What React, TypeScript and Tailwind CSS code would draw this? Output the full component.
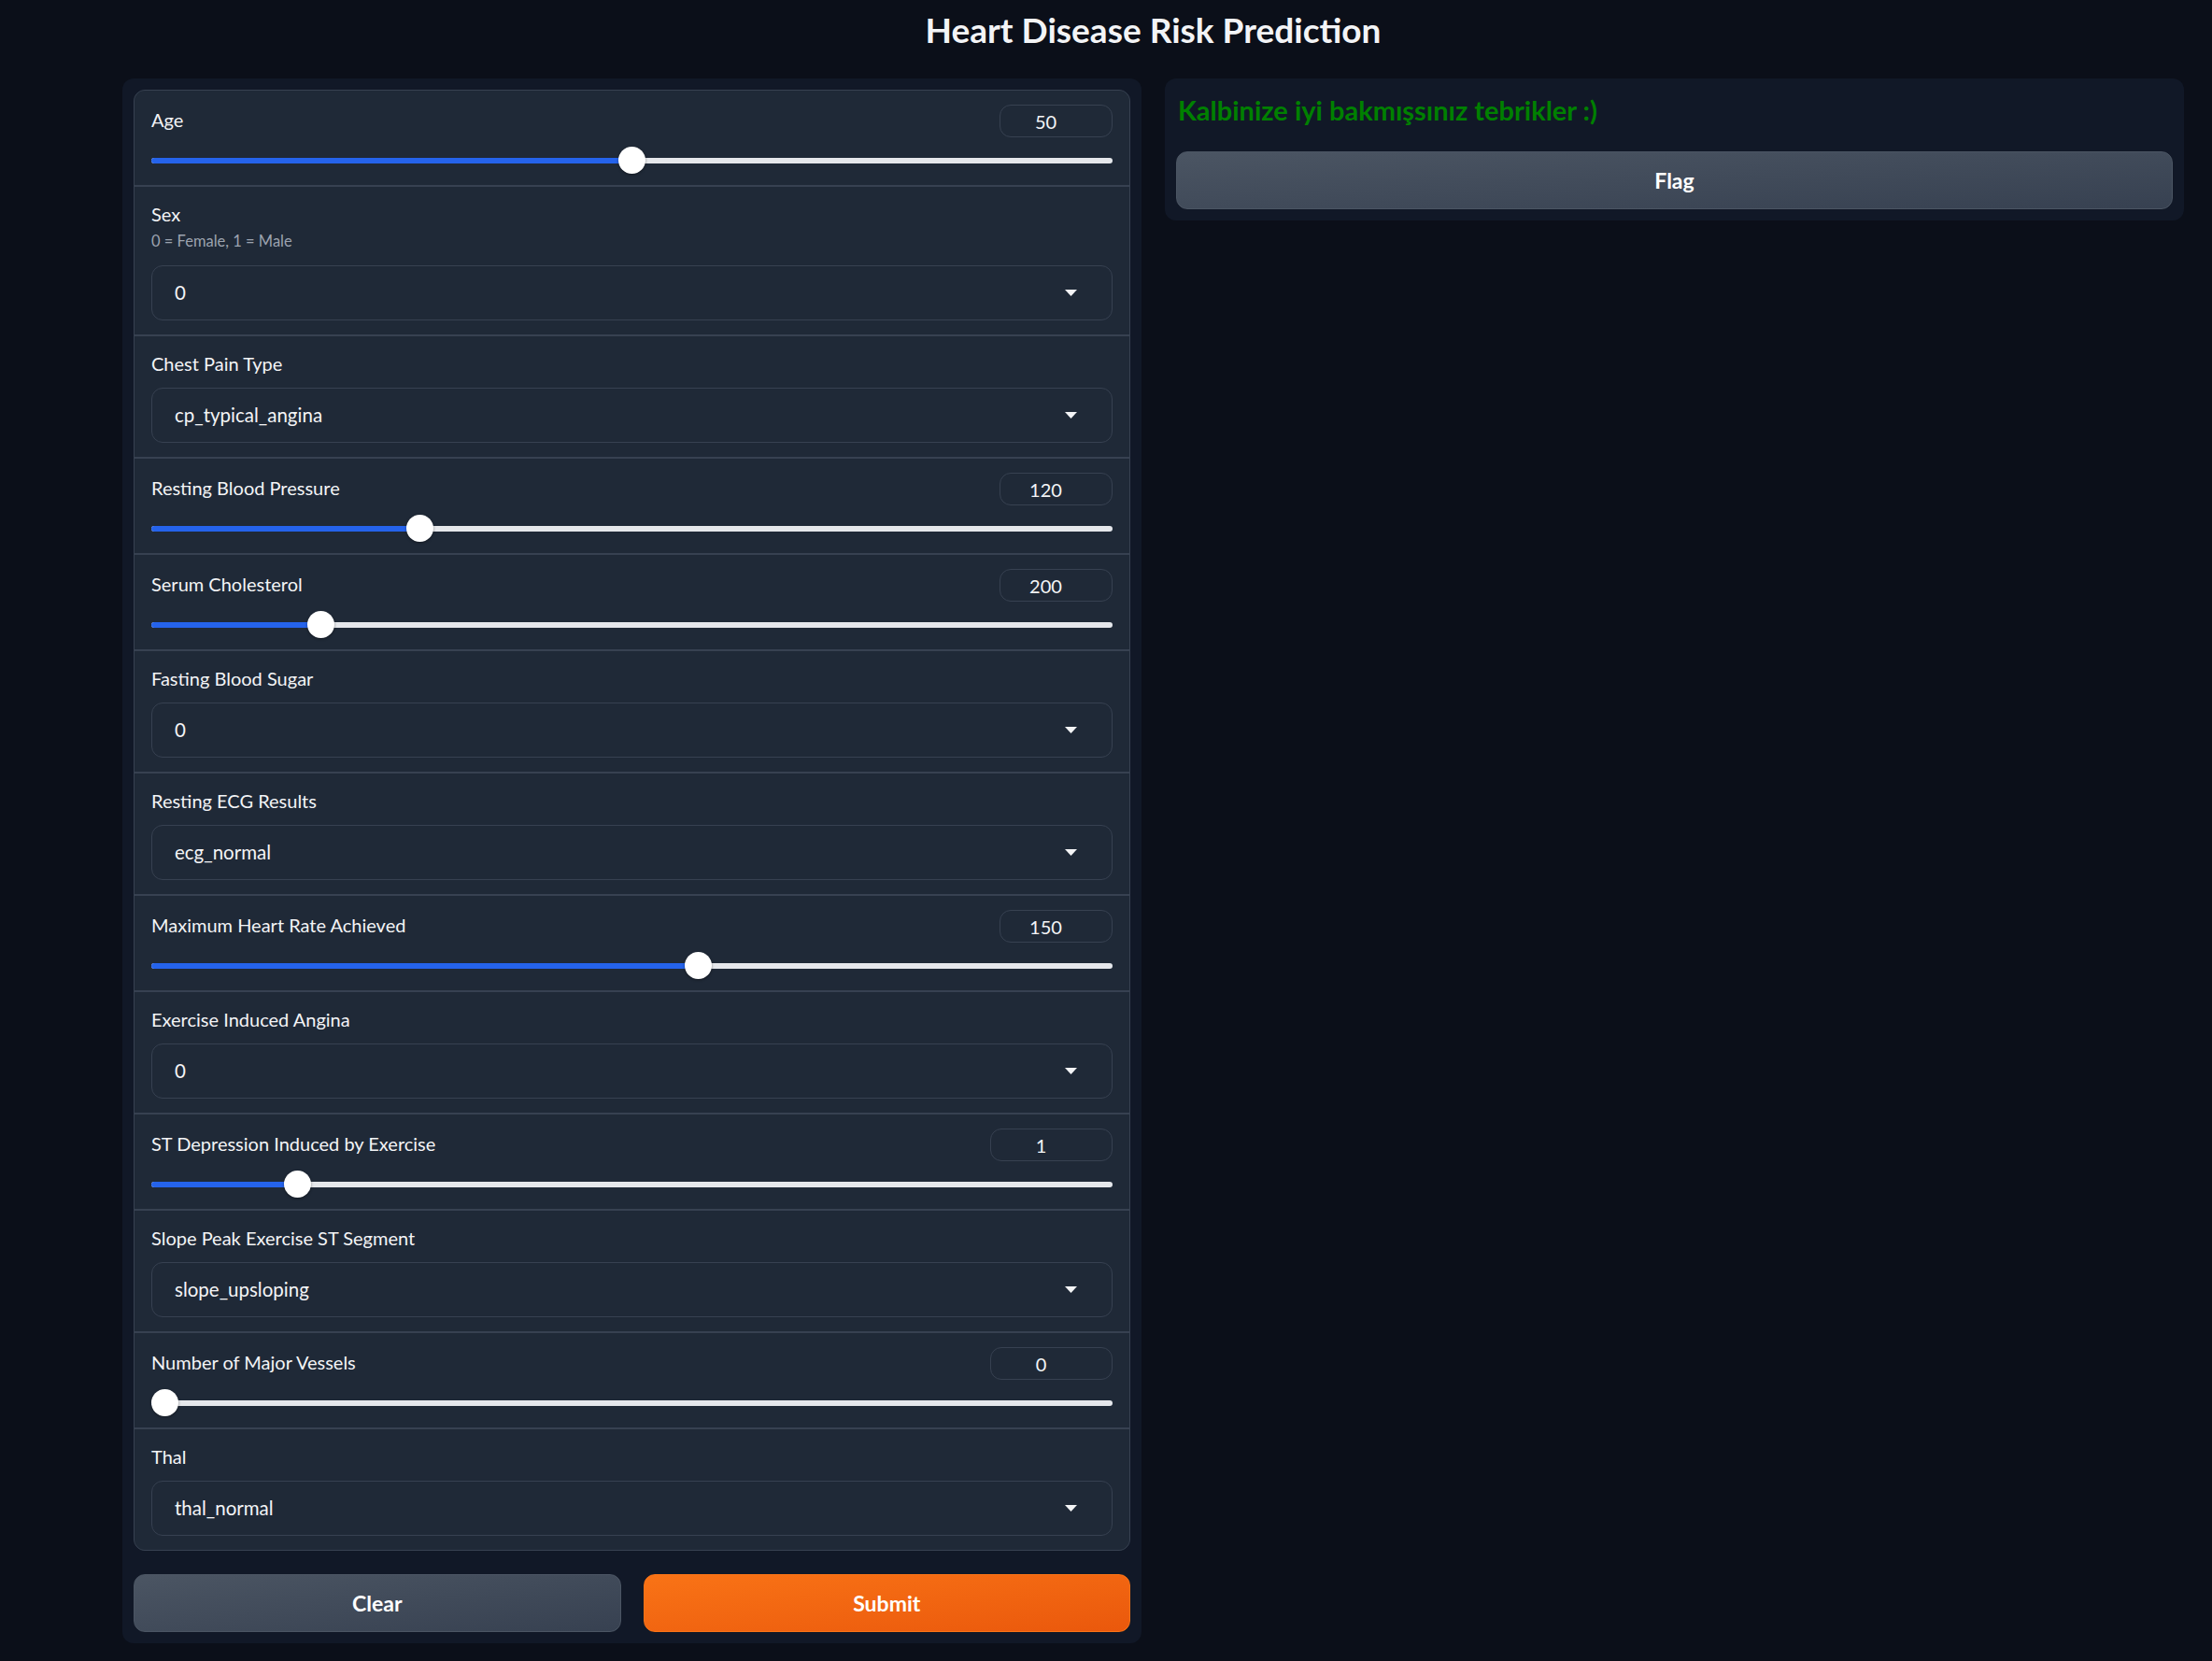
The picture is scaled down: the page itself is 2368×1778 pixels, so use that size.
import React from "react";

type SliderProps = { label: string; value: string; frac: number; boxW?: string };

function SliderField({ label, value, frac, boxW = "w-[121px]" }: SliderProps) {
  // thumb travels between the two ends of the track, minus half its size
  const pos = `calc(14.5px + (100% - 29px) * ${frac})`;
  return (
    <div className="bg-[#1f2937] px-[18px] pt-[15px] pb-[11px]">
      <div className="flex items-center justify-between h-[35px]">
        <span className="-mt-[4px] text-[20px] text-[#f3f4f6]">{label}</span>
        <div
          className={`${boxW} h-[35px] rounded-[12px] border border-[#374151] flex items-center justify-center pr-[22px] text-[20px] text-[#f3f4f6]`}
        >
          {value}
        </div>
      </div>
      <div className="relative h-[30px] mt-[10px] flex items-center">
        <div className="w-full h-[6px] rounded-full bg-[#e5e7eb]" />
        <div
          className="absolute left-0 h-[6px] rounded-l-full bg-[#2563eb]"
          style={{ width: pos }}
        />
        <div
          className="absolute top-0 w-[29px] h-[29px] -ml-[14.5px] rounded-full bg-white shadow-[0_1px_3px_rgba(0,0,0,0.4)]"
          style={{ left: pos }}
        />
      </div>
    </div>
  );
}

function Arrow() {
  return (
    <svg width="13" height="7" viewBox="0 0 13 7">
      <path d="M0 0 L13 0 L6.5 7 Z" fill="#f3f4f6" />
    </svg>
  );
}

function DropdownField({ label, info, value }: { label: string; info?: string; value: string }) {
  return (
    <div className="bg-[#1f2937] px-[18px] pt-[15px] pb-[15px]">
      <div className="h-[30px] flex items-center pb-[2px] text-[20px] text-[#f3f4f6]">{label}</div>
      {info ? (
        <div className="h-[27px] flex items-center text-[16.5px] text-[#9ca3af]">{info}</div>
      ) : null}
      <div
        className={`${info ? "mt-[12px]" : "mt-[10px]"} h-[59px] rounded-[12px] border border-[#374151] bg-[#1f2937] flex items-center justify-between pl-[24px] pr-[37px]`}
      >
        <span className="text-[20.5px] text-[#f3f4f6]">{value}</span>
        <Arrow />
      </div>
    </div>
  );
}

function GrayButton({ text }: { text: string }) {
  return (
    <button className="flex-1 h-[62px] rounded-[12px] border border-[#4b5563] bg-gradient-to-br from-[#4b5563] to-[#374151] text-white text-[23px] font-bold">
      {text}
    </button>
  );
}

export default function App() {
  return (
    <div className="min-h-[1778px] bg-[#0b0f19] font-['Lato',sans-serif] text-[#f3f4f6]">
      <div className="ml-[131px] w-[2207px]">
        <h1 className="pt-[8px] h-[56px] text-center text-[37px] leading-[48px] font-bold text-[#f3f4f6]">
          Heart Disease Risk Prediction
        </h1>

        <div className="mt-[28px] flex items-start gap-[25px]">
          {/* inputs */}
          <div className="flex-1 rounded-[12px] bg-[#111827] p-[12px]">
            <div className="flex flex-col gap-[2px] rounded-[12px] border border-[#374151] bg-[#374151] overflow-hidden">
              <SliderField label="Age" value="50" frac={0.5} />
              <DropdownField label="Sex" info="0 = Female, 1 = Male" value="0" />
              <DropdownField label="Chest Pain Type" value="cp_typical_angina" />
              <SliderField label="Resting Blood Pressure" value="120" frac={0.273} />
              <SliderField label="Serum Cholesterol" value="200" frac={0.167} />
              <DropdownField label="Fasting Blood Sugar" value="0" />
              <DropdownField label="Resting ECG Results" value="ecg_normal" />
              <SliderField label="Maximum Heart Rate Achieved" value="150" frac={0.571} />
              <DropdownField label="Exercise Induced Angina" value="0" />
              <SliderField
                label="ST Depression Induced by Exercise"
                value="1"
                frac={0.142}
                boxW="w-[131px]"
              />
              <DropdownField label="Slope Peak Exercise ST Segment" value="slope_upsloping" />
              <SliderField label="Number of Major Vessels" value="0" frac={0} boxW="w-[131px]" />
              <DropdownField label="Thal" value="thal_normal" />
            </div>
            <div className="mt-[25px] flex gap-[24px]">
              <GrayButton text="Clear" />
              <button className="flex-1 h-[62px] rounded-[12px] border border-[#f97316] bg-gradient-to-br from-[#f97316] to-[#ea580c] text-white text-[23px] font-bold">
                Submit
              </button>
            </div>
          </div>

          {/* output */}
          <div className="flex-1 rounded-[12px] bg-[#111827] p-[12px]">
            <div className="h-[44px] flex items-center pl-[2px] text-[29px] font-bold text-[#008000]">
              Kalbinize iyi bakmışsınız tebrikler :)
            </div>
            <div className="mt-[22px] flex">
              <GrayButton text="Flag" />
            </div>
          </div>
        </div>
      </div>
    </div>
  );
}
